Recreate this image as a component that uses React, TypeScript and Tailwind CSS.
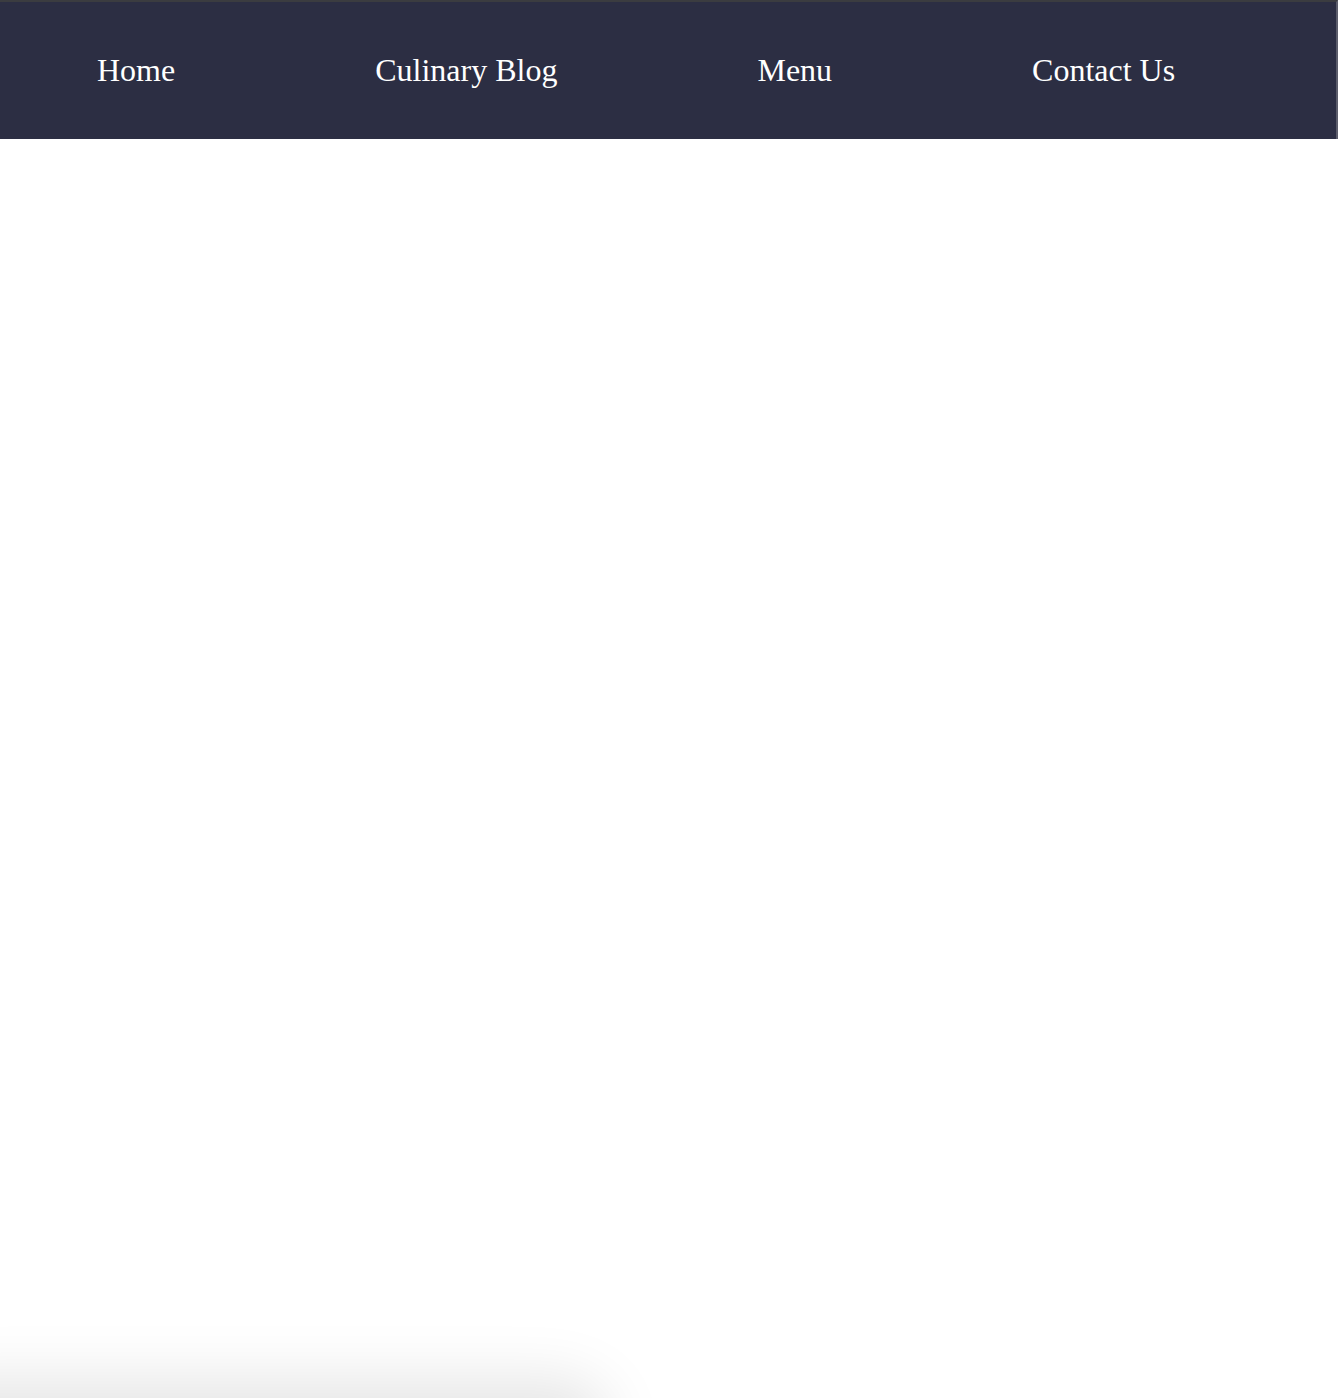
const links = ["Home", "Culinary Blog", "Menu", "Contact Us"];

export default function App() {
  return (
    <div className="flex h-[1398px] flex-col overflow-hidden bg-white">
      <nav className="flex h-[139px] shrink-0 items-center gap-[200px] border-t-2 border-r-2 border-t-[#3b3c40] border-r-[#5c5d6b] bg-[#2c2e43] pl-[97px]">
        {links.map((label) => (
          <a
            key={label}
            href="#"
            className="pb-[1px] font-['Liberation_Serif','Times_New_Roman',serif] text-[32px] leading-none text-white"
          >
            {label}
          </a>
        ))}
      </nav>
      <main className="flex-1" />
      {/* soft shadow peeking in at the bottom edge */}
      <div className="h-[90px] shrink-0 overflow-hidden">
        <div className="-ml-[60px] mt-[100px] h-[40px] w-[640px] rounded-[40px] bg-[#e6e6e6] shadow-[0_0_60px_30px_#e6e6e6]" />
      </div>
    </div>
  );
}
